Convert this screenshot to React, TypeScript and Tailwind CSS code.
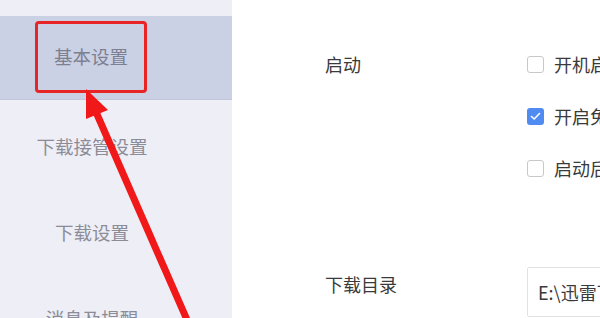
import React from 'react';

const font = { fontFamily: '"Noto Sans CJK SC", "Noto Sans", sans-serif' };

function NavItem({ label }: { label: string }) {
  return (
    <div className="h-[86px] pt-[8px] w-[184px] flex items-center justify-center shrink-0">
      <span className="text-[18.5px] text-[#8c8c96] whitespace-nowrap">{label}</span>
    </div>
  );
}

function Check({ checked, label }: { checked?: boolean; label: string }) {
  return (
    <div className="h-[24px] flex items-center gap-[10px] whitespace-nowrap">
      {checked ? (
        <span className="w-[17px] h-[17px] rounded-[3px] bg-[#4f8bf0] flex items-center justify-center shrink-0">
          <svg width="11" height="9" viewBox="0 0 11 9" fill="none">
            <path d="M1.5 4.5L4.2 7L9.5 1.5" stroke="#fff" strokeWidth="1.6" strokeLinecap="round" strokeLinejoin="round" />
          </svg>
        </span>
      ) : (
        <span className="w-[17px] h-[17px] rounded-[3px] border border-[#c8c8c8] bg-white shrink-0" />
      )}
      <span className="text-[18px] text-[#3a3a3a]">{label}</span>
    </div>
  );
}

export default function App() {
  return (
    <div className="relative w-[600px] h-[318px] overflow-hidden bg-white flex" style={font}>
      {/* sidebar */}
      <div className="w-[232px] h-full bg-[#eeeef6] flex flex-col shrink-0">
        <div className="h-[16px] shrink-0" />
        <div className="h-[84px] shrink-0 bg-[#cbd1e5] border-b border-[#c2c6d8] flex items-start pt-[5px] pl-[35px]">
          <div className="w-[112px] h-[72px] border-[3px] border-[#e82424] rounded-[4px] flex items-center justify-center">
            <span className="text-[18.5px] text-[#7c8090] whitespace-nowrap">基本设置</span>
          </div>
        </div>
        <NavItem label="下载接管设置" />
        <NavItem label="下载设置" />
        <NavItem label="消息及提醒" />
      </div>

      {/* content */}
      <div className="flex-1 pt-[52px] pl-[93px] flex flex-col">
        <div className="flex">
          <div className="w-[202px] h-[24px] flex items-center text-[18px] text-[#3a3a3a] shrink-0">启动</div>
          <div className="flex flex-col gap-[28px]">
            <Check label="开机启动" />
            <Check checked label="开启免打扰模式" />
            <Check label="启动后自动开始未完成的任务" />
          </div>
        </div>
        <div className="flex mt-[87px]">
          <div className="w-[202px] h-[24px] mt-[5px] flex items-center text-[18px] text-[#3a3a3a] shrink-0">下载目录</div>
          <div className="w-[300px] h-[50px] border border-[#e2e2e2] rounded-[2px] pl-[10px] flex items-center text-[18px] text-[#3a3a3a] whitespace-nowrap shrink-0">
            E:\迅雷下载
          </div>
        </div>
      </div>

      {/* annotation arrow */}
      <svg className="absolute inset-0 pointer-events-none" width="600" height="318" viewBox="0 0 600 318">
        <line x1="96" y1="112" x2="198" y2="345" stroke="#f01818" strokeWidth="7" />
        <polygon points="86,89 108,110 86,119" fill="#f01818" />
      </svg>
    </div>
  );
}
